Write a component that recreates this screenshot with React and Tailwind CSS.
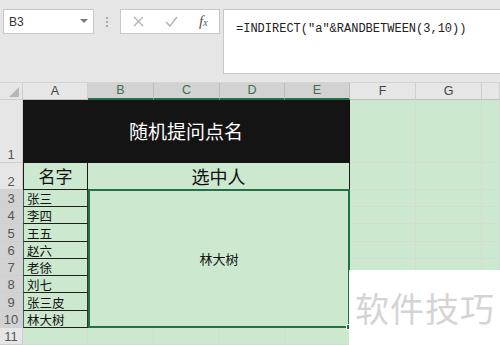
import React from 'react';

const cjk = { fontFamily: '"Noto Sans CJK SC", "Noto Sans", sans-serif' };
const cols = ['A', 'B', 'C', 'D', 'E', 'F', 'G', ''];
const names = ['张三', '李四', '王五', '赵六', '老徐', '刘七', '张三皮', '林大树'];
const rowH = ['h-[17px]', 'h-[17px]', 'h-[18px]', 'h-[17px]', 'h-[17px]', 'h-[17px]', 'h-[18px]', 'h-[17px]'];

const Grid = 'border-r border-b border-[#d3dcd4]';

const RowHead = ({ n, sel, className = '' }) => (
  <div
    className={`flex items-end justify-center border-r border-b border-[#cfcfcf] text-[13px] leading-[13px] pb-[1px] text-[#555] ${sel ? 'bg-[#d2d2d2]' : 'bg-[#e6e6e6]'} ${className}`}
  >
    {n}
  </div>
);

const App = () => {
  return (
    <div className="w-[500px] h-[345px] overflow-hidden relative bg-[#cce8cf]" style={{ fontFamily: '"Liberation Sans", sans-serif' }}>
      {/* toolbar */}
      <div className="h-[83px] bg-[#e6e6e6] border-b border-[#d4d4d4] flex items-start">
        <div className="ml-[3px] mt-[9px] w-[91px] h-[25px] bg-white border border-[#c8c8c8] flex items-center justify-between pl-[5px] pr-[5px]">
          <span className="text-[12px] text-[#333]">B3</span>
          <svg width="8" height="5" viewBox="0 0 8 5"><path d="M0 0 L8 0 L4 4 Z" fill="#7a7a7a" /></svg>
        </div>
        <div className="ml-[12px] mt-[17px] flex flex-col gap-[2px]">
          <span className="w-[2px] h-[2px] bg-[#a8a8a8]" />
          <span className="w-[2px] h-[2px] bg-[#a8a8a8]" />
          <span className="w-[2px] h-[2px] bg-[#a8a8a8]" />
        </div>
        <div className="ml-[12px] mt-[9px] w-[100px] h-[25px] bg-white border border-[#c8c8c8] flex items-center">
          <svg className="ml-[12px]" width="11" height="11" viewBox="0 0 11 11"><path d="M1 1 L10 10 M10 1 L1 10" stroke="#b4b4b4" strokeWidth="1.4" /></svg>
          <svg className="ml-[21px]" width="13" height="11" viewBox="0 0 13 11"><path d="M1 6 L5 10 L12 1" stroke="#b4b4b4" strokeWidth="1.5" fill="none" /></svg>
          <span className="ml-[21px] text-[15px] leading-none italic text-[#555]" style={{ fontFamily: '"Liberation Serif", serif' }}>f<span className="text-[10px]">x</span></span>
        </div>
        <div className="ml-[3px] mt-[9px] flex-1 h-[65px] bg-white border border-[#c8c8c8] border-r-0 pl-[12px] pt-[5px]">
          <span className="text-[12px] leading-none text-[#222]" style={{ fontFamily: '"Liberation Mono", monospace' }}>=INDIRECT(″a″&amp;RANDBETWEEN(3,10))</span>
        </div>
      </div>

      {/* sheet */}
      <div className="grid grid-cols-[23px_65px_66px_66px_65px_65px_66px_66px_1fr]">
        {/* header row */}
        <div className="h-[17px] bg-[#e6e6e6] border-r border-b border-[#cfcfcf] flex items-end justify-end pr-[3px] pb-[2px]">
          <svg width="10" height="10" viewBox="0 0 10 10"><path d="M10 0 L10 10 L0 10 Z" fill="#b8b8b8" /></svg>
        </div>
        {cols.map((c, i) => {
          const sel = i >= 1 && i <= 4;
          return (
            <div
              key={i}
              className={`h-[17px] flex items-center justify-center text-[12.5px] border-r ${sel ? 'bg-[#d2d2d2] text-[#3c6e4e] border-[#bdbdbd] border-b-2 border-b-[#217346]' : 'bg-[#e6e6e6] text-[#444] border-[#cfcfcf] border-b border-b-[#bdbdbd]'}`}
            >
              {c}
            </div>
          );
        })}

        {/* row 1 */}
        <RowHead n="1" className="h-[63px]" />
        <div className="col-span-5 h-[63px] bg-[#141414] border-r border-[#0d0d0d] flex items-center justify-center text-white text-[19px]" style={cjk}>
          随机提问点名
        </div>
        <div className={Grid} />
        <div className={Grid} />
        <div className={Grid} />

        {/* row 2 */}
        <RowHead n="2" className="h-[27px]" />
        <div className="h-[27px] border-l border-r border-b border-[#1a1a1a] flex items-center justify-center text-[17px] text-[#111]" style={cjk}>
          名字
        </div>
        <div className="col-span-4 h-[27px] border-r border-b border-[#1a1a1a] flex items-center justify-center text-[18px] text-[#111]" style={cjk}>
          选中人
        </div>
        <div className={Grid} />
        <div className={Grid} />
        <div className={Grid} />

        {/* rows 3-10 */}
        {names.map((nm, i) => (
          <React.Fragment key={nm}>
            <RowHead n={String(i + 3)} sel className={rowH[i]} />
            <div
              className={`${rowH[i]} border-l border-l-[#3f6f50] border-r border-r-[#2a3a2f] border-b border-b-[#1e1e1e] flex items-end pl-[3px] text-[12.5px] leading-[13px] pb-[1px] text-[#111]`}
              style={cjk}
            >
              {nm}
            </div>
            {i === 0 && (
              <div className="col-span-4 row-span-8 relative border-2 border-[#217346] -mt-[1px] flex items-center justify-center text-[13px] text-[#111]" style={cjk}>
                林大树
                <span className="absolute -right-[4px] -bottom-[4px] w-[6px] h-[6px] bg-[#217346] border border-white" />
              </div>
            )}
            <div className={`${rowH[i]} ${Grid}`} />
            <div className={`${rowH[i]} ${Grid}`} />
            <div className={`${rowH[i]} ${Grid}`} />
          </React.Fragment>
        ))}

        {/* row 11 */}
        <RowHead n="11" className="h-[17px]" />
        {cols.map((c, i) => (
          <div key={i} className={`h-[17px] ${Grid}`} />
        ))}
      </div>

      {/* watermark */}
      <div className="absolute left-[349px] top-[270px] w-[151px] h-[75px] bg-white flex items-center pl-[6px]">
        <span className="text-[34px] text-[#d4d4d4] tracking-[1px]" style={cjk}>软件技巧</span>
      </div>
    </div>
  );
};

export default App;
